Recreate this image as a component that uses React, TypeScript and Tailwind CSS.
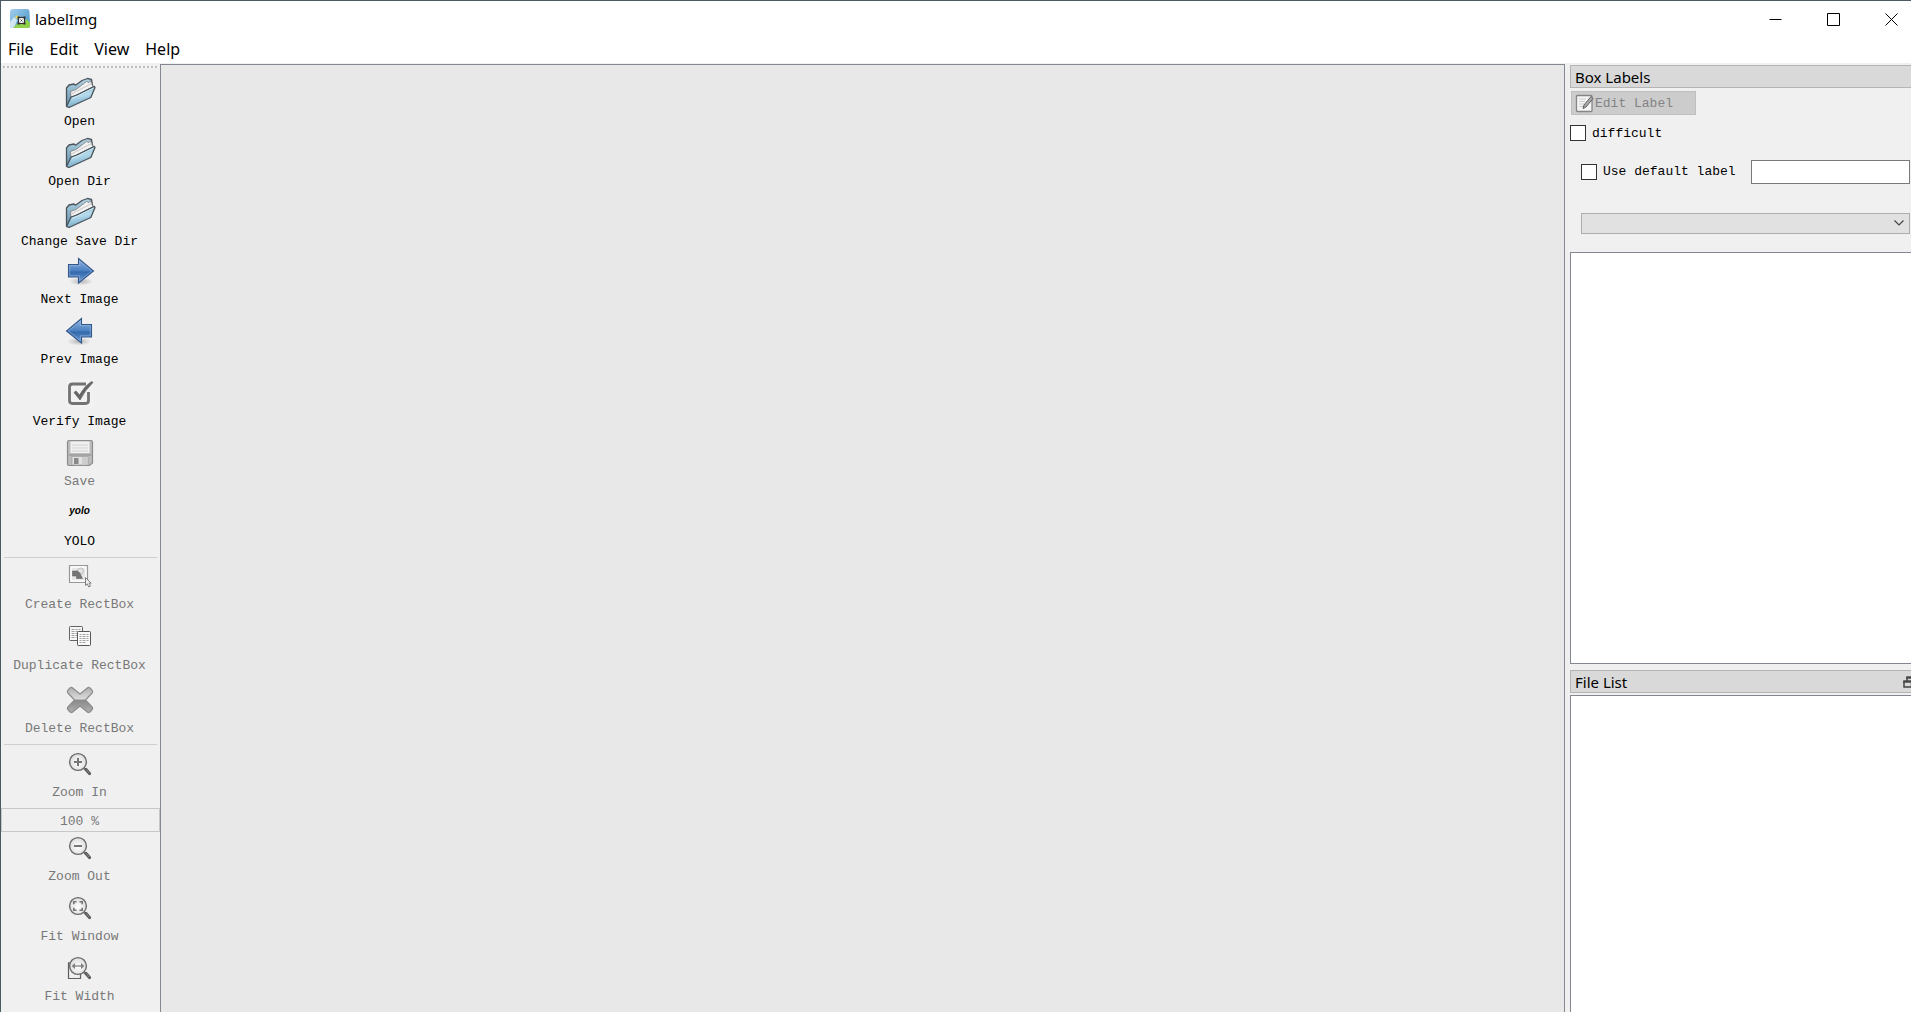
import React, { useId, useState } from 'react';

const ui = "font-['Noto_Sans','Open_Sans',sans-serif] text-[15px] leading-5";
const menu = "font-['Noto_Sans','Open_Sans',sans-serif] text-base leading-5";
const mono = "font-['Liberation_Mono',monospace] text-[13px] leading-5";

function Icon({ children }: { children: React.ReactNode }) {
  return (
    <svg viewBox="0 0 32 32" className="size-8 shrink-0" aria-hidden="true">
      {children}
    </svg>
  );
}

function FolderIcon() {
  const id = useId();
  return (
    <Icon>
      <defs>
        <linearGradient id={id + 'f'} x1="0" y1="0" x2="0.3" y2="1">
          <stop offset="0" stopColor="#7fb2ce" />
          <stop offset="0.55" stopColor="#b4d9ea" />
          <stop offset="1" stopColor="#6fa6c6" />
        </linearGradient>
        <linearGradient id={id + 'b'} x1="0" y1="0" x2="0" y2="1">
          <stop offset="0" stopColor="#b3d3e4" />
          <stop offset="1" stopColor="#5f8fab" />
        </linearGradient>
      </defs>
      <path d="M2.5 29V11L5 8l5-1 1.500 1.200L18 3.500l5.500-2 4 .8 1 6L7 21 4.500 30z" fill={`url(#${id}b)`} stroke="#4b5359" strokeWidth="1.3" strokeLinejoin="round" />
      <path d="M6.500 14.500 12 12.500 22.500 4.500 25 5.500 26.500 3.500 28.300 8.500 30 9.500 7 20.500z" fill="#f3f3f3" stroke="#77797b" strokeWidth="0.8" />
      <path d="M7.500 17 27.500 6.500" stroke="#cfcfcf" strokeWidth="1.200" />
      <path d="M7 20.200 13 18 30.300 9.300 31 10.500 26.800 20.500 5 30.500 2.500 29.500z" fill={`url(#${id}f)`} stroke="#4b5359" strokeWidth="1.3" strokeLinejoin="round" />
      <path d="M8 21.200 13.500 19 29.500 11" stroke="#d5ecf6" strokeWidth="0.8" fill="none" />
    </Icon>
  );
}

function ArrowIcon({ back = false }: { back?: boolean }) {
  const id = useId();
  return (
    <Icon>
      <defs>
        <linearGradient id={id} x1="0" y1="0" x2="0" y2="1">
          <stop offset="0" stopColor="#8fb3de" />
          <stop offset="0.5" stopColor="#4a80c0" />
          <stop offset="0.55" stopColor="#3469ad" />
          <stop offset="1" stopColor="#6b9bd2" />
        </linearGradient>
        <radialGradient id={id + 's'}>
          <stop offset="0" stopColor="#000" stopOpacity="0.25" />
          <stop offset="1" stopColor="#000" stopOpacity="0" />
        </radialGradient>
      </defs>
      <g transform={back ? 'translate(32 0) scale(-1 1)' : undefined}>
        <ellipse cx="17" cy="26.500" rx="12" ry="4" fill={`url(#${id}s)`} />
        <path d="M4.500 9.500h10v-6L29.500 16l-15 12v-6h-10z" fill={`url(#${id})`} stroke="#34588c" strokeWidth="1.1" />
        <path d="M5.700 10.700h10v-4.500L27.700 16l-12 9.600v-4.800h-10z" fill="none" stroke="#a9c6e8" strokeWidth="0.8" opacity="0.6" />
      </g>
    </Icon>
  );
}

function VerifyIcon() {
  return (
    <Icon>
      <rect x="2" y="2" width="28" height="28" fill="#f2f2f2" />
      <path d="M22 7H8.500Q5.500 7 5.500 10v13.500q0 3 3 3h13q3 0 3-3V15" fill="none" stroke="#737373" strokeWidth="2.800" />
      <path d="M10 15.500 12 14l3.500 4Q20.500 9 27.500 4.500L29 5.500Q21 13 16 23z" fill="#666" stroke="#666" strokeWidth="0.8" strokeLinejoin="round" />
    </Icon>
  );
}

function SaveIcon() {
  return (
    <Icon>
      <path d="M3.500 5q0-1.500 1.500-1.500h22q1.500 0 1.500 1.500v21l-3 2.500H5Q3.500 28.500 3.500 27z" fill="#bcbcbc" stroke="#8c8c8c" strokeWidth="1.200" />
      <path d="M6.500 4.500h19v11.500h-19z" fill="#f1f1f1" />
      <path d="M8 8h16M8 11h16M8 14h16" stroke="#d2d2d2" />
      <path d="M4.500 18h23" stroke="#8e8e8e" />
      <path d="M8 19.500h16V28H8z" fill="#e2e2e2" stroke="#9c9c9c" strokeWidth="0.7" />
      <path d="M10 21h4.500v6H10z" fill="#898989" />
      <path d="M18 20h5v8h-5z" fill="#cdcdcd" />
    </Icon>
  );
}

function YoloIcon() {
  return (
    <span className="flex h-8 items-start pt-1.5 font-['Liberation_Sans',sans-serif] text-[10px] leading-4 font-bold text-black italic">yolo</span>
  );
}

function CreateIcon() {
  return (
    <Icon>
      <rect x="5.500" y="5.500" width="18" height="17" fill="#f8f8f8" stroke="#3c3c3c" strokeWidth="1.200" strokeDasharray="1 1" />
      <rect x="8" y="8" width="13" height="12" fill="#e6e6e6" />
      <circle cx="16.500" cy="11" r="3" fill="#e2e2e2" stroke="#b5b5b5" strokeWidth="0.800" />
      <path d="M8.500 11h5.500v1.500h1.500l3 6H12.500V16h-4z" fill="#747474" stroke="#666" strokeWidth="0.6" />
      <path d="M21.500 17.500v8l1.800-1.600 1.400 3 1.800-.8-1.400-2.900h2z" fill="#ececec" stroke="#747474" strokeWidth="0.900" />
    </Icon>
  );
}

function DuplicateIcon() {
  return (
    <Icon>
      <rect x="5.500" y="5.500" width="13" height="14" rx="0.8" fill="#f6f6f6" stroke="#626262" />
      <path d="M7.500 8.500h9M7.500 10.500h9M7.500 12.500h9M7.500 14.500h9M7.500 16.500h5" stroke="#999" strokeWidth="0.900" strokeDasharray="3 1 2 1" />
      <rect x="13.500" y="10.500" width="13" height="14" rx="0.8" fill="#fafafa" stroke="#555" />
      <path d="M15.500 13.500h9M15.500 15.500h9M15.500 17.500h9M15.500 19.500h9M15.500 21.500h6" stroke="#999" strokeWidth="0.900" strokeDasharray="2 1 3 1" />
    </Icon>
  );
}

function DeleteIcon() {
  const id = useId();
  return (
    <Icon>
      <defs>
        <linearGradient id={id} x1="0" y1="0" x2="0" y2="1">
          <stop offset="0" stopColor="#b0b0b0" />
          <stop offset="0.45" stopColor="#dadada" />
          <stop offset="0.52" stopColor="#8a8a8a" />
          <stop offset="1" stopColor="#b0b0b0" />
        </linearGradient>
      </defs>
      <path d="M8 3.500 16 10l8-6.500q2-.5 4.500 3.500v1.500L21.500 16l7 7.500V25q-2.500 4-4.500 3.500L16 22l-8 6.500Q6 29 3.500 25v-1.500L10.500 16 3.500 8.500V7Q6 3 8 3.500z" fill={`url(#${id})`} stroke="#8c8c8c" strokeWidth="1.200" strokeLinejoin="round" />
    </Icon>
  );
}

function ZoomIcon({ kind }: { kind: 'in' | 'out' | 'window' | 'width' }) {
  const id = useId();
  return (
    <Icon>
      <defs>
        <radialGradient id={id} cx="0.5" cy="0.55">
          <stop offset="0" stopColor="#fff" />
          <stop offset="1" stopColor="#dedede" />
        </radialGradient>
      </defs>
      {kind === 'width' && <path d="M4.500 11v15.500h12V12z" fill="#eee" stroke="#5e5e5e" strokeWidth="1.200" />}
      <path d="M20 20.500l2.500 2" stroke="#777" strokeWidth="1.800" />
      <path d="M22 21.500l3.500 4" stroke="#5a5a5a" strokeWidth="3.200" strokeLinecap="round" />
      <path d="M22.300 21.600l3 3.500" stroke="#999" strokeWidth="0.800" />
      <circle cx="14" cy="14" r="8.400" fill={`url(#${id})`} stroke="#6a6a6a" strokeWidth="1.400" />
      {kind === 'in' && <path d="M10 14h8M14 10v8" stroke="#757575" strokeWidth="2" />}
      {kind === 'out' && <path d="M10 14h8" stroke="#757575" strokeWidth="2" />}
      {kind === 'window' && (
        <path d="M9.800 12.300V9.800h2.700M15.500 9.800h2.700v2.500M18.200 15.700v2.500h-2.700M12.500 18.200H9.800v-2.500" fill="none" stroke="#777" strokeWidth="1.600" />
      )}
      {kind === 'width' && (
        <>
          <path d="M10 14h8" stroke="#808080" strokeWidth="1.300" />
          <path d="M11 11v6l-3.300-3zM17 11v6l3.300-3z" fill="#808080" />
        </>
      )}
    </Icon>
  );
}

type ToolProps = { icon: React.ReactNode; label: string; height?: string; disabled?: boolean };

function Tool({ icon, label, height = 'h-[60px]', disabled = false }: ToolProps) {
  return (
    <button
      type="button"
      disabled={disabled}
      className={`${height} ${mono} flex w-full shrink-0 flex-col items-center gap-[3px] pr-0.5 whitespace-nowrap text-black disabled:text-[#787878]`}
    >
      {icon}
      <span>{label}</span>
    </button>
  );
}

function AppLogo() {
  return (
    <svg viewBox="0 0 20 20" className="size-5" aria-hidden="true">
      <defs>
        <linearGradient id="sky" x1="0" y1="0" x2="1" y2="1">
          <stop offset="0" stopColor="#a5d0ee" />
          <stop offset="1" stopColor="#3f8fc4" />
        </linearGradient>
      </defs>
      <path d="M0 3q0-3 3-3h14q2.500 0 2.500 2.500L20 17q0 2-2 2H2q-2 0-2-2z" fill="url(#sky)" />
      <path d="M0 13l4-5 3 3-3 8H2q-2 0-2-2z" fill="#cfe6f0" />
      <path d="M3 19l5-5 5 1 4-5 3 4v3q0 2-2 2z" fill="#8fd14a" />
      <circle cx="7" cy="8" r="1.600" fill="#f5dc4e" />
      <rect x="8.500" y="8.500" width="6" height="6" fill="#fff" stroke="#333" strokeWidth="1.200" />
      <path d="M7.500 7.500h2v2h-2zM13.500 7.500h2v2h-2zM7.500 13.500h2v2h-2zM13.500 13.500h2v2h-2z" fill="#333" />
      <path d="M10.500 10.500l2 2M12.500 10.500l-2 2" stroke="#333" strokeWidth="0.9" />
    </svg>
  );
}

function WindowButton({ label, d }: { label: string; d: string }) {
  return (
    <button type="button" aria-label={label} className="flex h-9 w-10 items-center justify-center">
      <svg viewBox="0 0 13 13" className="size-[13px]" fill="none" stroke="#000" strokeWidth="1" aria-hidden="true">
        <path d={d} />
      </svg>
    </button>
  );
}

function PanelTitle({ children, action }: { children: string; action?: React.ReactNode }) {
  return (
    <div className="flex h-[23px] shrink-0 items-center justify-between overflow-hidden border border-r-0 border-[#b4b4b4] bg-[#d9d9d9] pl-1">
      <h2 className={ui}>{children}</h2>
      {action}
    </div>
  );
}

const checkbox = 'size-4 shrink-0 appearance-none border border-[#333] bg-white checked:bg-[#0078d7]';

export default function App() {
  const [zoom, setZoom] = useState('100 %');
  const [label, setLabel] = useState('');

  return (
    <div className="flex h-screen w-full flex-col overflow-hidden border-t border-l border-[#4a5a62] bg-[#f0f0f0] text-black">
      <header className="shrink-0 bg-white">
        <div className="flex h-9 items-center">
          <div className="flex flex-1 items-center gap-[5px] pl-[9px]">
            <AppLogo />
            <h1 className={ui}>labelImg</h1>
          </div>
          <div className="flex gap-[18px]">
            <WindowButton label="Minimize" d="M.5 6.500h12" />
            <WindowButton label="Maximize" d="M.5.5h12v12H.5z" />
            <WindowButton label="Close" d="M.5.5l12 12M12.500.5l-12 12" />
          </div>
        </div>
        <nav className={`${menu} flex h-[26px] items-center gap-4 pb-0.5 pl-[7px]`}>
          {['File', 'Edit', 'View', 'Help'].map((m) => (
            <button key={m} type="button">{m}</button>
          ))}
        </nav>
      </header>

      <div className="flex min-h-0 flex-1">
        <aside className="flex w-[159px] shrink-0 flex-col pt-[3px]" aria-label="Tools">
          <div className="mx-0.5 mb-[9px] h-[2px] shrink-0 bg-[repeating-linear-gradient(90deg,#bdbdbd_0_2px,#f8f8f8_2px_4px)]" />
          <Tool icon={<FolderIcon />} label="Open" />
          <Tool icon={<FolderIcon />} label="Open Dir" />
          <Tool icon={<FolderIcon />} label="Change Save Dir" height="h-[58px]" />
          <Tool icon={<ArrowIcon />} label="Next Image" />
          <Tool icon={<ArrowIcon back />} label="Prev Image" height="h-[62px]" />
          <Tool icon={<VerifyIcon />} label="Verify Image" />
          <Tool icon={<SaveIcon />} label="Save" disabled />
          <Tool icon={<YoloIcon />} label="YOLO" />
          <hr className="mx-[3px] mb-0.5 shrink-0 border-[#cfcfcf]" />
          <Tool icon={<CreateIcon />} label="Create RectBox" height="h-[61px]" disabled />
          <Tool icon={<DuplicateIcon />} label="Duplicate RectBox" height="h-[63px]" disabled />
          <Tool icon={<DeleteIcon />} label="Delete RectBox" disabled />
          <hr className="mx-[3px] mb-[3px] shrink-0 border-[#cfcfcf]" />
          <Tool icon={<ZoomIcon kind="in" />} label="Zoom In" disabled />
          <input
            aria-label="Zoom level"
            disabled
            value={zoom}
            onChange={(e) => setZoom(e.target.value)}
            className={`${mono} h-6 w-full shrink-0 border border-[#c8c8c8] bg-transparent pt-0.5 pr-0.5 text-center text-[#787878]`}
          />
          <Tool icon={<ZoomIcon kind="out" />} label="Zoom Out" disabled />
          <Tool icon={<ZoomIcon kind="window" />} label="Fit Window" disabled />
          <Tool icon={<ZoomIcon kind="width" />} label="Fit Width" disabled />
        </aside>

        <main className="mt-px flex-1 border border-b-0 border-[#828790] bg-[#e8e8e8]" aria-label="Canvas" />

        <aside className="ml-[5px] flex w-[341px] shrink-0 flex-col pt-0.5" aria-label="Annotations">
          <PanelTitle>Box Labels</PanelTitle>
          <div className="flex flex-col items-start">
            <button
              type="button"
              disabled
              className={`${mono} mt-[3px] ml-px flex h-6 w-[125px] items-center gap-px border border-[#bfbfbf] bg-[#ccc] pl-[3px] text-[#838383]`}
            >
              <svg viewBox="0 0 19 19" className="size-[19px]" aria-hidden="true">
                <rect x="1.500" y="1.500" width="15.500" height="16" rx="1" fill="#f5f5f5" stroke="#858585" strokeWidth="1.300" />
                <path d="M4 5h7M4 7.500h6M4 10h5M4 12.500h8" stroke="#ccc" />
                <path d="M16 2.500l2 2-7 8.500-3 1.500 1-3.500z" fill="#aaa" stroke="#555" strokeWidth="0.9" />
              </svg>
              <span className="pt-0.5">Edit Label</span>
            </button>
            <label className={`${mono} mt-[7px] flex items-center gap-1.5`}>
              <input type="checkbox" className={checkbox} />
              <span className="pt-0.5">difficult</span>
            </label>
          </div>
          <div className="mt-4 flex h-6 items-center justify-between pr-px pl-[11px]">
            <label className={`${mono} flex items-center gap-1.5`}>
              <input type="checkbox" className={checkbox} />
              <span>Use default label</span>
            </label>
            <input
              aria-label="Default label"
              value={label}
              onChange={(e) => setLabel(e.target.value)}
              className={`${mono} h-6 w-[159px] border border-[#7a7a7a] bg-white px-1`}
            />
          </div>
          <div className="relative mt-[29px] mr-px ml-[11px] h-[21px]">
            <select aria-label="Filter labels" className={`${mono} block h-full w-full appearance-none border border-[#adadad] bg-[#e1e1e1] px-1`}>
              <option></option>
            </select>
            <svg viewBox="0 0 10 6" className="pointer-events-none absolute top-[7px] right-1.5 h-1.5 w-2.5" fill="none" stroke="#444" strokeWidth="1.200" aria-hidden="true">
              <path d="M.5.5L5 5 9.500.5" />
            </svg>
          </div>
          <div role="listbox" aria-label="Box labels" className="mt-[18px] h-[412px] shrink-0 border border-r-0 border-[#828790] bg-white" />
          <div className="mt-1.5 flex min-h-0 flex-1 flex-col">
            <PanelTitle
              action={
                <button type="button" aria-label="Detach" className="-mr-1">
                  <svg viewBox="0 0 12 12" className="size-3" fill="none" stroke="#444" aria-hidden="true">
                    <path d="M4 5V1.500h8v6H9" strokeWidth="1.500" />
                    <path d="M3.300 1.500H12" strokeWidth="2.200" />
                    <path d="M1 5.500h7.500V11H1z" strokeWidth="1.500" />
                    <path d="M.3 5.500h9" strokeWidth="2.200" />
                  </svg>
                </button>
              }
            >
              File List
            </PanelTitle>
            <div role="listbox" aria-label="Files" className="mt-0.5 flex-1 border border-r-0 border-b-0 border-[#828790] bg-white" />
          </div>
        </aside>
      </div>
    </div>
  );
}
